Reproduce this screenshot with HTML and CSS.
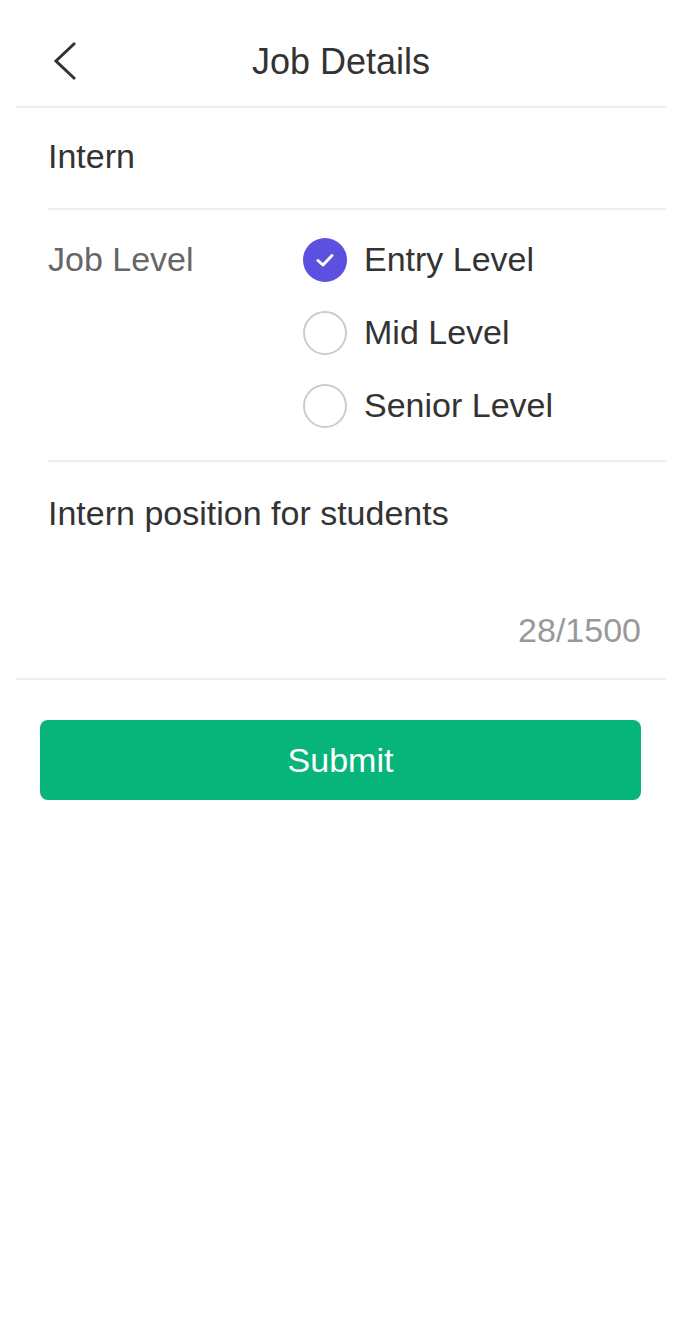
FILE: index.html
```html
<!DOCTYPE html>
<html lang="en">
<head>
<meta charset="utf-8">
<title>Job Details</title>
<link rel="stylesheet" href="styles.css">
</head>
<body>
<div class="page">
  <header class="nav">
    <span class="back">
      <svg width="30" height="44" viewBox="0 0 30 44"><path d="M23 4 L4 22 L23 40" fill="none" stroke="#333" stroke-width="3"/></svg>
    </span>
    <h1 class="title">Job Details</h1>
  </header>

  <div class="cell cell-inset">
    <div class="value">Intern</div>
  </div>

  <div class="cell cell-inset level">
    <div class="label">Job Level</div>
    <div class="options">
      <div class="option">
        <span class="radio checked">
          <svg width="24" height="24" viewBox="0 0 24 24"><path d="M5 12.5 L10 17 L19 7.5" fill="none" stroke="#fff" stroke-width="3" stroke-linecap="round" stroke-linejoin="round"/></svg>
        </span>
        <span class="opt-text">Entry Level</span>
      </div>
      <div class="option">
        <span class="radio"></span>
        <span class="opt-text">Mid Level</span>
      </div>
      <div class="option">
        <span class="radio"></span>
        <span class="opt-text">Senior Level</span>
      </div>
    </div>
  </div>

  <div class="cell desc">
    <div class="value">Intern position for students</div>
    <div class="counter">28/1500</div>
  </div>

  <button class="submit">Submit</button>
</div>
</body>
</html>
```

FILE: styles.css
```css
* { box-sizing: border-box; }
html, body {
  margin: 0;
  padding: 0;
  background: #fff;
}
body {
  font-family: "Liberation Sans", Arial, Helvetica, sans-serif;
  color: #333;
}
.page {
  margin: 0 16px;
}
.nav {
  height: 108px;
  display: flex;
  align-items: center;
  justify-content: center;
  position: relative;
  border-bottom: 2px solid #eeeeee;
}
.back {
  position: absolute;
  left: 36px;
  top: 39px;
  width: 30px;
  height: 44px;
  display: block;
}
.back svg { display: block; }
.title {
  margin: 18px 0 0;
  font-size: 36px;
  font-weight: normal;
  color: #333;
  line-height: 1;
}
.cell {
  border-bottom: 2px solid #eeeeee;
}
.cell-inset {
  margin-left: 32px;
}
.value {
  font-size: 34px;
  line-height: 40px;
  color: #333;
}
.cell-inset > .value {
  padding: 28px 0 32px;
}
.level {
  display: flex;
  padding: 13px 0 18px;
}
.label {
  width: 255px;
  font-size: 34px;
  line-height: 73px;
  color: #666;
  flex: none;
}
.options {
  display: flex;
  flex-direction: column;
}
.option {
  display: flex;
  align-items: center;
  height: 73px;
}
.radio {
  width: 44px;
  height: 44px;
  border-radius: 50%;
  border: 2px solid #cccccc;
  display: flex;
  align-items: center;
  justify-content: center;
  margin-right: 17px;
  flex: none;
}
.radio.checked {
  border: none;
  background: #5c50e0;
}
.radio svg { display: block; }
.opt-text {
  font-size: 34px;
  color: #333;
}
.desc {
  padding: 31px 25px 14px 32px;
}
.desc .value {
  height: 117px;
}
.counter {
  text-align: right;
  font-size: 34px;
  line-height: 40px;
  color: #999;
  padding-bottom: 14px;
}
.submit {
  display: block;
  width: 601px;
  height: 80px;
  margin: 40px 0 0 24px;
  border: none;
  border-radius: 8px;
  background: #07b47a;
  color: #fff;
  font-family: "Liberation Sans", Arial, Helvetica, sans-serif;
  font-size: 34px;
  padding: 0;
}
```
